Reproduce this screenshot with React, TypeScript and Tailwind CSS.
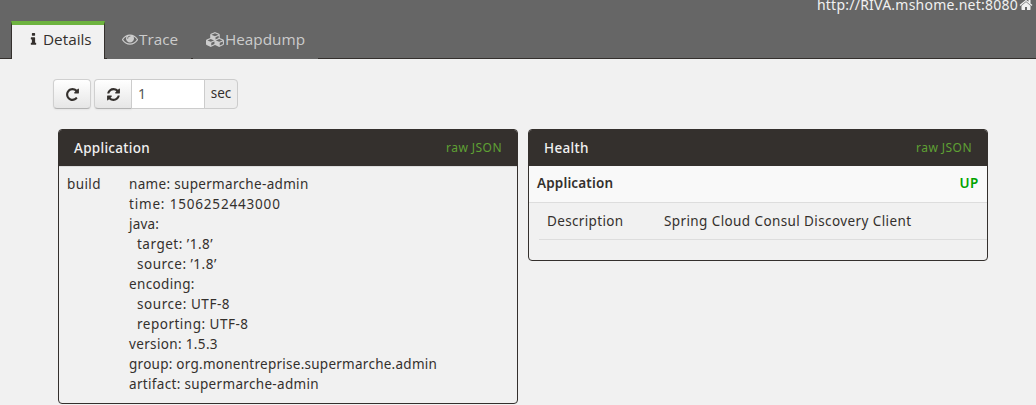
import React from "react";

const ICONS = {
  repeat:
    "M1664 256v448q0 26-19 45t-45 19h-448q-42 0-59-40-17-39 14-69l138-138q-148-137-349-137-104 0-198.5 40.5t-163.5 109.5-109.5 163.5-40.5 198.5 40.5 198.5 109.5 163.5 163.5 109.5 198.5 40.5q119 0 225-52t179-147q7-10 23-12 15 0 25 9l137 138q9 8 9.5 20.5t-7.5 22.5q-109 132-264 204.5t-327 72.5q-156 0-298-61t-245-164-164-245-61-298 61-298 164-245 245-164 298-61q147 0 284.5 55.5t244.5 156.5l130-129q29-31 70-14 39 17 39 59z",
  refresh:
    "M1639 1056q0 5-1 7-64 268-268 434.5t-478 166.5q-146 0-282.5-55t-243.5-157l-129 129q-19 19-45 19t-45-19-19-45v-448q0-26 19-45t45-19h448q26 0 45 19t19 45-19 45l-137 137q71 66 161 102t187 36q134 0 250-65t186-179q11-17 53-117 8-23 30-23h192q13 0 22.5 9.5t9.5 22.5zm25-800v448q0 26-19 45t-45 19h-448q-26 0-45-19t-19-45 19-45l138-138q-148-137-349-137-134 0-250 65t-186 179q-11 17-53 117-8 23-30 23h-199q-13 0-22.5-9.5t-9.5-22.5v-7q65-268 270-434.5t480-166.5q146 0 284 55.5t245 156.5l130-129q19-19 45-19t45 19 19 45z",
  home: "M1472 992v480q0 26-19 45t-45 19h-384v-384h-256v384h-384q-26 0-45-19t-19-45v-480q0-1 .5-3t.5-3l575-474 575 474q1 2 1 6zm223-69l-62 74q-8 9-21 11h-3q-13 0-21-7l-692-577-692 577q-12 8-24 7-13-2-21-11l-62-74q-8-10-7-23.5t11-21.5l719-599q32-26 76-26t76 26l244 204v-195q0-14 9-23t23-9h192q14 0 23 9t9 23v408l219 182q10 8 11 21.5t-7 23.5z",
  eye: "M1664 960q-152-236-381-353 61 104 61 225 0 185-131.5 316.5t-316.5 131.5-316.5-131.5-131.5-316.5q0-121 61-225-229 117-381 353 133 205 333.5 326.5t434.5 121.5 434.5-121.5 333.5-326.5zm-720-384q0-20-14-34t-34-14q-125 0-214.5 89.5t-89.5 214.5q0 20 14 34t34 14 34-14 14-34q0-86 61-147t147-61q20 0 34-14t14-34zm848 384q0 34-20 69-140 230-376.5 368.5t-499.5 138.5-499.5-139-376.5-368q-20-35-20-69t20-69q140-229 376.5-368t499.5-139 499.5 139 376.5 368q20 35 20 69z",
  info: "M1216 1344v128q0 26-19 45t-45 19h-512q-26 0-45-19t-19-45v-128q0-26 19-45t45-19h64v-384h-64q-26 0-45-19t-19-45v-128q0-26 19-45t45-19h384q26 0 45 19t19 45v576h64q26 0 45 19t19 45zm-128-1152v192q0 26-19 45t-45 19h-256q-26 0-45-19t-19-45v-192q0-26 19-45t45-19h256q26 0 45 19t19 45z",
  cubes:
    "M640 1632l384-192v-314l-384 164v342zm-64-454l404-173-404-173-404 173zm1088 454l384-192v-314l-384 164v342zm-64-454l404-173-404-173-404 173zm-448-293l384-165v-266l-384 164v267zm-64-379l441-189-441-189-441 189zm1088 518v416q0 36-19 67t-52 47l-448 224q-25 14-57 14t-57-14l-448-224q-4-2-7-4-2 2-7 4l-448 224q-25 14-57 14t-57-14l-448-224q-33-16-52-47t-19-67v-416q0-38 21.5-70t56.5-48l434-186v-400q0-38 21.5-70t56.5-48l448-192q23-10 50-10t50 10l448 192q35 16 56.5 48t21.5 70v400l434 186q36 16 57 48t21 70z",
};

function Icon({ name, className, wide }: { name: keyof typeof ICONS; className: string; wide?: boolean }) {
  return (
    <svg viewBox={wide ? "0 0 2304 1792" : "0 0 1792 1792"} fill="currentColor" className={`shrink-0 ${className}`}>
      <path d={ICONS[name]} />
    </svg>
  );
}

const BUILD: { text: string; className: string }[] = [
  { text: "name: supermarche-admin", className: "tracking-[0.32px]" },
  { text: "time: 1506252443000", className: "tracking-[0.82px]" },
  { text: "java:", className: "tracking-[0.2px]" },
  { text: "target: ’1.8’", className: "pl-[8px] tracking-[0.5px]" },
  { text: "source: ’1.8’", className: "pl-[8px] tracking-[0.5px]" },
  { text: "encoding:", className: "tracking-[0.35px]" },
  { text: "source: UTF-8", className: "pl-[8px] tracking-[0.55px]" },
  { text: "reporting: UTF-8", className: "pl-[8px] tracking-[0.5px]" },
  { text: "version: 1.5.3", className: "tracking-[0.35px]" },
  { text: "group: org.monentreprise.supermarche.admin", className: "tracking-[0.26px]" },
  { text: "artifact: supermarche-admin", className: "tracking-[0.33px]" },
];

function Panel({ title, className, children }: { title: string; className: string; children: React.ReactNode }) {
  return (
    <section className={`w-[460px] overflow-hidden rounded-[4px] border border-[#34302d] ${className}`}>
      <header className="flex h-9 items-center justify-between bg-[#34302d] px-[15px] pb-px">
        <h2 className="text-[13.5px] font-medium tracking-[0.3px] text-[#f1f1f1]">{title}</h2>
        <a className="pt-px text-[12px] tracking-[0.45px] text-[#5fa134]">raw JSON</a>
      </header>
      {children}
    </section>
  );
}

export default function App() {
  return (
    <div className="h-[405px] w-[1036px] overflow-hidden bg-[#f1f1f1] font-['Noto_Sans',sans-serif] text-[13.5px] leading-5 text-[#34302d]">
      <header className="flex h-[59px] flex-col justify-between bg-[#666666]">
        <div className="flex h-[10px] items-center justify-end gap-px pr-[3px] text-[14px] leading-[10px] tracking-[0.24px] text-[#f1f1f1]">
          <span>http://RIVA.mshome.net:8080</span>
          <Icon name="home" className="size-[14px]" />
        </div>
        <nav className="flex h-[38px] font-['Open_Sans',sans-serif] text-[15.3px]">
          <div className="w-[11px] border-b border-[#34302d]" />
          <a className="flex w-[94px] items-center border-x border-t-4 border-x-[#34302d] border-t-[#6db33f] bg-[#f1f1f1] pb-[6px] pl-[14px]">
            <Icon name="info" className="mt-px size-[15px]" />
            <span className="ml-[2px]">Details</span>
          </a>
          <div className="w-[2px] border-b border-[#34302d]" />
          <a className="flex w-[84px] items-center pb-[2px] pl-[15px] text-[#cccccc]">
            <Icon name="eye" className="size-[16px]" />
            <span className="ml-px">Trace</span>
          </a>
          <div className="w-[2px] border-b border-[#34302d]" />
          <a className="flex w-[125px] items-center pb-[2px] pl-[13px] text-[#cccccc]">
            <Icon name="cubes" wide className="h-[15px] w-[19px]" />
            <span>Heapdump</span>
          </a>
          <div className="flex-1 border-b border-[#34302d]" />
        </nav>
      </header>

      <div className="mt-5 ml-[53px] flex h-[30px]">
        <button className="flex w-[38px] items-center justify-center rounded-[4px] border border-[#d0d0d0] border-b-[#b3b3b3] bg-linear-to-b from-white to-[#e6e6e6] shadow-[0_1px_2px_rgba(0,0,0,0.05)]">
          <Icon name="repeat" className="size-[15px]" />
        </button>
        <button className="ml-[3px] flex w-[38px] items-center justify-center rounded-l-[4px] border border-[#d0d0d0] border-b-[#b3b3b3] bg-linear-to-b from-white to-[#e6e6e6] shadow-[0_1px_2px_rgba(0,0,0,0.05)]">
          <Icon name="refresh" className="size-[15px]" />
        </button>
        <div className="-ml-px flex w-[74px] items-center border border-[#cccccc] bg-white pl-[6px] text-[14px] text-[#555555]">1</div>
        <div className="-ml-px flex w-[34px] items-center justify-center rounded-r-[4px] border border-[#cccccc] bg-[#eeeeee] pb-[2px]">sec</div>
      </div>

      <main className="mt-5 ml-[58px] flex items-start gap-[10px]">
        <Panel title="Application" className="h-[275px]">
          <div className="flex border-t border-[#dddddd] pt-[7px] pl-2">
            <div className="w-[62px] tracking-[0.4px]">build</div>
            <div>
              {BUILD.map((line, i) => (
                <div key={i} className={`h-5 whitespace-nowrap ${line.className}`}>
                  <span>{line.text}</span>
                </div>
              ))}
            </div>
          </div>
        </Panel>
        <Panel title="Health" className="h-[132px]">
          <div className="flex h-[37px] items-center justify-between border-b border-[#dddddd] bg-[#f9f9f9] px-2 pb-[2px] font-semibold tracking-[0.15px]">
            <span>Application</span>
            <span className="tracking-[0.6px] text-[#00a300]">UP</span>
          </div>
          <div className="ml-[10px] flex h-[37px] items-center border-b border-[#dddddd] pb-px pl-2">
            <span className="w-[117px] tracking-[0.35px]">Description</span>
            <span className="tracking-[0.4px]">Spring Cloud Consul Discovery Client</span>
          </div>
        </Panel>
      </main>
    </div>
  );
}
